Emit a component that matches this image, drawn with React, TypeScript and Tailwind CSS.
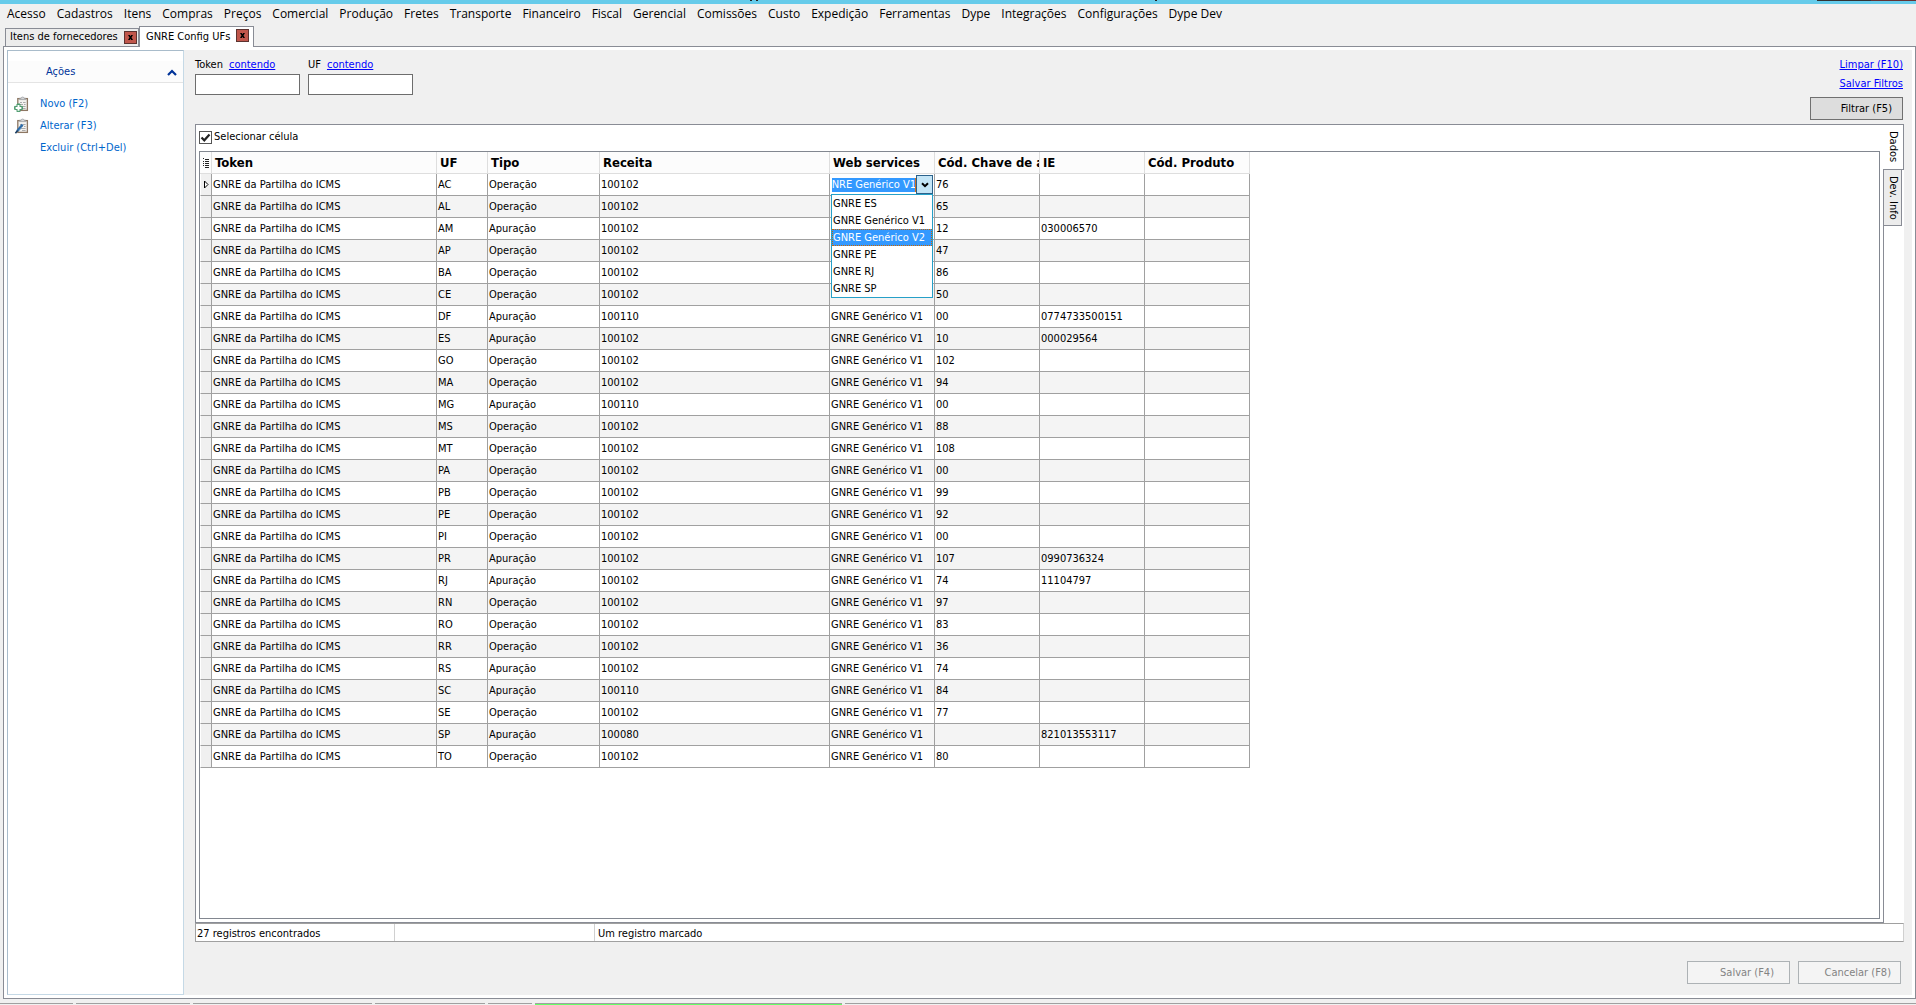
import React, { useState } from 'react';
import clsx from 'clsx';

const menuItems = [
  'Acesso', 'Cadastros', 'Itens', 'Compras', 'Preços', 'Comercial', 'Produção', 'Fretes', 'Transporte',
  'Financeiro', 'Fiscal', 'Gerencial', 'Comissões', 'Custo', 'Expedição', 'Ferramentas', 'Dype',
  'Integrações', 'Configurações', 'Dype Dev',
];

const webServices = ['GNRE ES', 'GNRE Genérico V1', 'GNRE Genérico V2', 'GNRE PE', 'GNRE RJ', 'GNRE SP'];

// uf, tipo, receita, chave de acesso, ie
const rows: [string, string, string, string, string][] = [
  ['AC', 'Operação', '100102', '76', ''],
  ['AL', 'Operação', '100102', '65', ''],
  ['AM', 'Apuração', '100102', '12', '030006570'],
  ['AP', 'Operação', '100102', '47', ''],
  ['BA', 'Operação', '100102', '86', ''],
  ['CE', 'Operação', '100102', '50', ''],
  ['DF', 'Apuração', '100110', '00', '0774733500151'],
  ['ES', 'Apuração', '100102', '10', '000029564'],
  ['GO', 'Operação', '100102', '102', ''],
  ['MA', 'Operação', '100102', '94', ''],
  ['MG', 'Apuração', '100110', '00', ''],
  ['MS', 'Operação', '100102', '88', ''],
  ['MT', 'Operação', '100102', '108', ''],
  ['PA', 'Operação', '100102', '00', ''],
  ['PB', 'Operação', '100102', '99', ''],
  ['PE', 'Operação', '100102', '92', ''],
  ['PI', 'Operação', '100102', '00', ''],
  ['PR', 'Apuração', '100102', '107', '0990736324'],
  ['RJ', 'Apuração', '100102', '74', '11104797'],
  ['RN', 'Operação', '100102', '97', ''],
  ['RO', 'Operação', '100102', '83', ''],
  ['RR', 'Operação', '100102', '36', ''],
  ['RS', 'Apuração', '100102', '74', ''],
  ['SC', 'Apuração', '100110', '84', ''],
  ['SE', 'Operação', '100102', '77', ''],
  ['SP', 'Apuração', '100080', '', '821013553117'],
  ['TO', 'Operação', '100102', '80', ''],
];

function CloseButton({ label }: { label: string }) {
  return (
    <button
      type="button"
      aria-label={`Fechar ${label}`}
      className="flex h-[13px] w-[13px] items-center justify-center border border-[#5c3330] bg-[#c0564b]"
    >
      <svg viewBox="0 0 7 7" className="h-[7px] w-[7px]">
        <path d="M1 1h1.8l.7 1.2.7-1.2H6L4.5 3.5 6 6H4.2l-.7-1.2L2.8 6H1l1.5-2.5z" fill="#000" />
      </svg>
    </button>
  );
}

function ClipboardIcon({ kind }: { kind: 'new' | 'edit' }) {
  return (
    <svg viewBox="0 0 16 16" className="h-4 w-4" fill="none">
      <rect x="3.8" y="2.6" width="9.6" height="11.8" fill="#f3f2ef" stroke="#8d7763" strokeWidth="1.3" />
      <path d="M5.6 3.6V2.2h1.6C7.2.6 10 .6 10 2.2h1.6v1.4z" fill="#d5d7d9" stroke="#8b8f94" strokeWidth=".6" />
      <path d="M6 6.5h2M9 6.5h2.6M6 8.5h3M10 8.5h1.6M6 10.5h5.6M8 12.5h3.6" stroke="#a3a3a3" strokeWidth=".9" />
      {kind === 'new' ? (
        <>
          <path d="M3 8h3v2.4h2.4v3H6v2.4H3v-2.4H.6v-3H3z" fill="#4b9a6c" stroke="#4b9a6c" strokeLinejoin="round" />
          <path d="M4.5 9v5.8M1.6 11.9h5.8" stroke="#fff" strokeWidth="2" />
        </>
      ) : (
        <>
          <path d="M3.2 13 8.6 6.6" stroke="#2e6ca8" strokeWidth="2.4" />
          <path d="M1.4 15.2 3.6 12.6" stroke="#173a5e" strokeWidth="1.6" />
          <path d="M5 12.8 7.6 9.8" stroke="#7fa9d0" strokeWidth=".8" />
        </>
      )}
    </svg>
  );
}

function WebServiceEditor() {
  const [value, setValue] = useState('GNRE Genérico V1');

  return (
    <div className="relative flex h-[21px] items-start pt-px pl-px">
      <div className="flex h-[19px] flex-1 items-center pl-px">
        <select
          aria-label="Web services"
          value={value}
          onChange={(e) => setValue(e.target.value)}
          className="h-[14px] w-full appearance-none overflow-hidden border-r border-[#d07020] bg-[#3399ff] p-0 -indent-2 text-[11px] leading-[14px] text-white"
        >
          {webServices.map((name) => (
            <option key={name}>{name}</option>
          ))}
        </select>
      </div>
      <button
        type="button"
        aria-label="Abrir lista"
        className="mr-px flex h-[19px] w-[17px] shrink-0 items-center justify-center border border-[#2c628b] bg-[#c4e5f6]"
      >
        <svg viewBox="0 0 8 6" className="h-[6px] w-2">
          <path d="M1 1.2 4 4.2 7 1.2" stroke="#000" strokeWidth="2" fill="none" />
        </svg>
      </button>
      <ul className="absolute top-5 left-px z-10 w-[102px] border border-[#26a0c8] bg-white">
        {webServices.map((name) => (
          <li
            key={name}
            className={clsx(
              'h-[17px] border text-[11px] leading-[15px]',
              name === 'GNRE Genérico V2' ? 'border-dotted border-[#cc6600] bg-[#3399ff] text-white' : 'border-transparent'
            )}
          >
            {name}
          </li>
        ))}
      </ul>
    </div>
  );
}

function GridTable() {
  const head = ['Token', 'UF', 'Tipo', 'Receita', 'Web services', 'Cód. Chave de acesso', 'IE', 'Cód. Produto'];
  const cell = 'border-r border-b border-[#a0a0a0] p-0 pl-px overflow-hidden whitespace-nowrap';

  return (
    <table className="w-[1050px] table-fixed border-separate border-spacing-0">
      <colgroup>
        <col className="w-[12px]" />
        <col className="w-[225px]" />
        <col className="w-[51px]" />
        <col className="w-[112px]" />
        <col className="w-[230px]" />
        <col className="w-[105px]" />
        <col className="w-[105px]" />
        <col className="w-[105px]" />
        <col className="w-[105px]" />
      </colgroup>
      <thead>
        <tr className="h-[22px] bg-[#fcfcfc] text-left text-[13px] leading-4">
          <th className="border-r border-b border-[#dedede] p-0">
            <svg viewBox="0 0 8 10" className="ml-[2px] h-[10px] w-2" shapeRendering="crispEdges">
              <path d="M1 0h1M3 1h4M1 3h1M3 3h4M1 5h1M3 5h4M1 7h1M3 7h4M3 9h4" transform="translate(0 .5)" stroke="#222" />
            </svg>
          </th>
          {head.map((h) => (
            <th key={h} className="overflow-hidden border-r border-b border-[#dedede] p-0 pl-[3px] font-bold whitespace-nowrap">
              {h}
            </th>
          ))}
        </tr>
      </thead>
      <tbody>
        {rows.map(([uf, tipo, receita, chave, ie], i) => (
          <tr key={uf} className={clsx('h-[22px] leading-[14px]', i % 2 === 1 && 'bg-[#f4f4f4]')}>
            <td className="border-r border-b border-l border-[#a0a0a0] border-l-white bg-[#f0f0f0] p-0">
              {i === 0 && (
                <svg viewBox="0 0 6 9" className="ml-[2px] h-[9px] w-[6px]">
                  <path d="M1.5 1v7L5 4.5z" fill="#fff" stroke="#000" />
                </svg>
              )}
            </td>
            <td className={cell}>GNRE da Partilha do ICMS</td>
            <td className={cell}>{uf}</td>
            <td className={cell}>{tipo}</td>
            <td className={cell}>{receita}</td>
            {i === 0 ? (
              <td className="border-r border-b border-[#a0a0a0] p-0">
                <WebServiceEditor />
              </td>
            ) : (
              <td className={cell}>GNRE Genérico V1</td>
            )}
            <td className={cell}>{chave}</td>
            <td className={cell}>{ie}</td>
            <td className={cell}></td>
          </tr>
        ))}
      </tbody>
    </table>
  );
}

function Sidebar() {
  return (
    <aside className="w-[177px] shrink-0 border border-[#c5d9e6] border-t-[#a9bccb] border-l-[#a9bccb] bg-white">
      <button
        type="button"
        className="mt-[10px] flex h-[22px] w-full items-center justify-between border-b border-[#e4e4e4] bg-[#fcfcfc] pt-[2px] pr-[6px] pl-[38px] text-[#003399]"
      >
        Ações
        <svg viewBox="0 0 10 7" className="h-[7px] w-[10px]">
          <path d="M1 6 5 2 9 6" stroke="#003399" strokeWidth="2.2" fill="none" />
        </svg>
      </button>
      <ul className="mt-[10px] pl-[6px] text-[#0066cc]">
        <li>
          <button type="button" className="flex h-[22px] items-center gap-[10px]">
            <ClipboardIcon kind="new" />
            Novo (F2)
          </button>
        </li>
        <li>
          <button type="button" className="flex h-[22px] items-center gap-[10px]">
            <ClipboardIcon kind="edit" />
            Alterar (F3)
          </button>
        </li>
        <li>
          <button type="button" className="flex h-[22px] items-center pl-[26px]">
            Excluir (Ctrl+Del)
          </button>
        </li>
      </ul>
    </aside>
  );
}

function FilterField({ id, label }: { id: string; label: string }) {
  return (
    <div className="w-[105px]">
      <div className="flex h-[14px] gap-[6px] leading-[14px]">
        <label htmlFor={id}>{label}</label>
        <a href="#" className="text-[#0000ff] underline">contendo</a>
      </div>
      <input id={id} type="text" className="mt-[2px] block h-[21px] w-full border border-[#6d6d6d] bg-white px-1" />
    </div>
  );
}

export default function App() {
  const [selectCell, setSelectCell] = useState(true);

  return (
    <div className="flex h-screen min-h-[1005px] flex-col overflow-hidden bg-[#f0f0f0] font-['DejaVu_Sans_Condensed',sans-serif] text-[11px] text-black">
      <div className="flex h-1 shrink-0 bg-[#66cbea]">
        <svg className="h-1 min-w-0 flex-1" shapeRendering="crispEdges">
          <path d="M750 .5h2M756 .5h2M1155 .5h2" stroke="#222" />
        </svg>
        <div className="h-px w-[54px] bg-[#333]" />
        <div className="h-px w-[45px] bg-[#633]" />
      </div>

      <nav className="flex h-[22px] shrink-0 items-start gap-[11px] pl-[7px] font-['Open_Sans',sans-serif] text-[12px] leading-5">
        {menuItems.map((item) => (
          <button key={item} type="button" className="whitespace-nowrap">{item}</button>
        ))}
      </nav>

      <div className="z-10 -mb-px flex h-[21px] shrink-0 items-end pl-[5px]">
        <div className="mb-px flex h-[18px] w-[134px] items-center justify-between border border-b-0 border-[#898c95] bg-[#ececec] pr-px pl-1">
          <button type="button" className="whitespace-nowrap">Itens de fornecedores</button>
          <CloseButton label="Itens de fornecedores" />
        </div>
        <div className="flex h-[21px] w-[115px] items-start justify-between border border-b-0 border-[#898c95] bg-white pt-[2px] pr-1 pl-[6px]">
          <button type="button" className="whitespace-nowrap">GNRE Config UFs</button>
          <CloseButton label="GNRE Config UFs" />
        </div>
      </div>

      <div className="ml-[3px] flex min-h-0 flex-1 border border-[#898c95] bg-white p-[3px]">
        <Sidebar />

        <main className="flex min-w-0 flex-1 flex-col bg-[#f0f0f0] pr-2 pl-[11px]">
          <div className="flex shrink-0 justify-between">
            <div className="flex gap-2 pt-2">
              <FilterField id="token" label="Token" />
              <FilterField id="uf" label="UF" />
            </div>
            <div className="flex flex-col items-end pt-[5px] pr-px leading-[19px]">
              <a href="#" className="text-[#0000ff] underline">Limpar (F10)</a>
              <a href="#" className="text-[#0000ff] underline">Salvar Filtros</a>
              <button
                type="button"
                className="mt-1 h-[23px] w-[93px] border border-[#707070] bg-[#dddddd] pr-[10px] text-right"
              >
                Filtrar (F5)
              </button>
            </div>
          </div>

          <div className="mt-1 flex min-h-0 flex-1 bg-white">
            <section className="flex min-w-0 flex-1 flex-col border border-r-0 border-[#898c95]">
              <div className="flex min-h-0 flex-1 flex-col px-[3px] pb-[3px]">
                <label className="flex h-[26px] items-center gap-[2px] pb-[2px]">
                  <input
                    type="checkbox"
                    checked={selectCell}
                    onChange={(e) => setSelectCell(e.target.checked)}
                    className="peer sr-only"
                  />
                  <span className="flex h-[13px] w-[13px] items-center justify-center border border-[#555] bg-white">
                    {selectCell && (
                      <svg viewBox="0 0 11 11" className="h-[11px] w-[11px]">
                        <path d="M1.5 5.5 4.3 8.3 9.5 2.5" stroke="#222" strokeWidth="2.2" fill="none" />
                      </svg>
                    )}
                  </span>
                  Selecionar célula
                </label>
                <div className="min-h-0 flex-1 overflow-hidden border border-[#828790]">
                  <GridTable />
                </div>
              </div>
            </section>
            <div className="flex w-[21px] shrink-0 flex-col">
              <button
                type="button"
                className="flex h-[46px] items-center justify-center border border-l-0 border-[#898c95] bg-white [writing-mode:vertical-rl]"
              >
                Dados
              </button>
              <div className="flex flex-1 flex-col border-l border-[#898c95]">
                <button
                  type="button"
                  className="flex h-[56px] w-[18px] items-center justify-center border border-t-0 border-l-0 border-[#898c95] bg-[#ececec] [writing-mode:vertical-rl]"
                >
                  Dev. Info
                </button>
              </div>
            </div>
          </div>

          <div className="flex h-[19px] shrink-0 border border-[#a0a0a0] border-r-[#d0d0d0] bg-white leading-5">
            <span className="w-[199px] border-r border-[#d0d0d0] pl-px">27 registros encontrados</span>
            <span className="w-[200px] border-r border-[#d0d0d0]" />
            <span className="pl-[3px]">Um registro marcado</span>
          </div>

          <div className="flex h-[53px] shrink-0 justify-end gap-2 pt-[19px] pr-[3px] text-[#838383]">
            <button type="button" disabled className="h-[23px] w-[103px] border border-[#adb2b5] bg-[#f4f4f4] pt-px pr-[15px] text-right">
              Salvar (F4)
            </button>
            <button type="button" disabled className="h-[23px] w-[103px] border border-[#adb2b5] bg-[#f4f4f4] pt-px pr-[9px] text-right">
              Cancelar (F8)
            </button>
          </div>
        </main>
      </div>

      <footer className="mt-1 flex h-[2px] shrink-0 gap-[3px]">
        <div className="w-[73px] border-t border-[#a0a0a0]" />
        <div className="w-[114px] border-t border-[#a0a0a0]" />
        <div className="w-[179px] border-t border-[#a0a0a0]" />
        <div className="w-[110px] border-t border-[#a0a0a0]" />
        <div className="w-[44px] border-t border-[#a0a0a0]" />
        <div className="w-[307px] border-t border-[#a0a0a0] bg-[#66ff66]" />
        <div className="flex-1 border-t border-[#a0a0a0]" />
      </footer>
    </div>
  );
}
